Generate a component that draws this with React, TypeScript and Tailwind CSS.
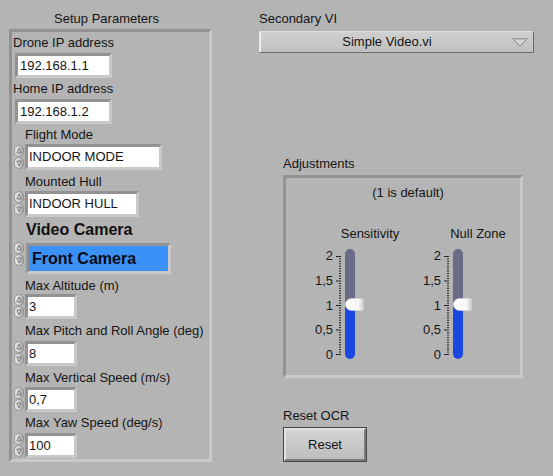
import React from "react";

function Spin() {
  return (
    <svg width="10" height="24" viewBox="0 0 10 24" className="shrink-0">
      <defs>
        <linearGradient id="spg" x1="0" x2="1" y1="0" y2="0">
          <stop offset="0" stopColor="#efefef" />
          <stop offset="0.5" stopColor="#d2d2d2" />
          <stop offset="1" stopColor="#9a9a9a" />
        </linearGradient>
      </defs>
      <rect x="0.5" y="0.5" width="9" height="11" rx="4.5" fill="url(#spg)" stroke="#8c8c8c" strokeWidth="0.8" />
      <rect x="0.5" y="12.5" width="9" height="11" rx="4.5" fill="url(#spg)" stroke="#8c8c8c" strokeWidth="0.8" />
      <path d="M5 3.2 L7.2 8 H2.8 Z" fill="none" stroke="#6a6a6a" strokeWidth="0.8" />
      <path d="M5 20.8 L7.2 16 H2.8 Z" fill="none" stroke="#6a6a6a" strokeWidth="0.8" />
    </svg>
  );
}

const frameCls =
  "border-[3px] border-t-[#929292] border-l-[#929292] border-b-[#c9c9c9] border-r-[#c9c9c9]";

function Scale() {
  const ticks = [];
  for (let i = 0; i <= 40; i++) {
    const y = 106.5 - i * 2.45;
    if (i % 10 === 0) {
      ticks.push(<rect key={i} x="1" y={y - 0.5} width="5" height="1" fill="#222" />);
    } else {
      ticks.push(<rect key={i} x="4" y={y - 0.5} width="2" height="1" fill="#222" />);
    }
  }
  return (
    <svg width="8" height="112" viewBox="0 0 8 112" className="absolute left-[25px] top-0">
      {ticks}
    </svg>
  );
}

function Slider() {
  return (
    <div className="relative w-[60px] h-[112px]">
      <div className="absolute left-0 top-[0px] w-[23px] text-right">2</div>
      <div className="absolute left-0 top-[25px] w-[23px] text-right">1,5</div>
      <div className="absolute left-0 top-[50px] w-[23px] text-right">1</div>
      <div className="absolute left-0 top-[74px] w-[23px] text-right">0,5</div>
      <div className="absolute left-0 top-[99px] w-[23px] text-right">0</div>
      <Scale />
      <div className="absolute left-[35px] top-[1px] w-[10px] h-[110px] rounded-full overflow-hidden flex flex-col">
        <div className="flex-1 bg-[#6c6b87]" />
        <div className="h-[53px] bg-[#1b48e0]" />
      </div>
      <svg width="19" height="13" viewBox="0 0 19 13" className="absolute left-[35px] top-[50px]">
        <defs>
          <linearGradient id="thg" x1="0" x2="1" y1="0" y2="0">
            <stop offset="0" stopColor="#ffffff" />
            <stop offset="0.75" stopColor="#f6f6f6" />
            <stop offset="1" stopColor="#c9c9c9" />
          </linearGradient>
        </defs>
        <path
          d="M7 0.5 H17 Q18.5 0.5 18.5 2 V11 Q18.5 12.5 17 12.5 H7 C2.5 12.5 0.3 9 0.3 6.5 C0.3 4 2.5 0.5 7 0.5 Z"
          fill="url(#thg)"
          stroke="#d8d8d8"
          strokeWidth="0.6"
        />
      </svg>
    </div>
  );
}

export default function App() {
  return (
    <div className="w-[553px] h-[476px] bg-[#b4b4b4] flex font-['Liberation_Sans',Arial,sans-serif] text-[13px] leading-[16px] text-[#141414] overflow-hidden">
      {/* Left column */}
      <div className="ml-[9px] w-[203px] flex flex-col shrink-0">
        <div className="mt-[11px] h-[16px] text-center pr-[8px]">Setup Parameters</div>
        <div className={`mt-[2px] h-[433px] flex flex-col ${frameCls}`}>
          <div className="mt-[3px] ml-[1px] h-[16px]">Drone IP address</div>
          <div className={`mt-[2px] ml-[3px] w-[97px] h-[25px] ${frameCls}`}>
            <div className="h-full bg-white pl-[2px] flex items-center">192.168.1.1</div>
          </div>
          <div className="mt-[3px] ml-[1px] h-[16px]">Home IP address</div>
          <div className={`mt-[2px] ml-[3px] w-[97px] h-[25px] ${frameCls}`}>
            <div className="h-full bg-white pl-[2px] flex items-center">192.168.1.2</div>
          </div>

          <div className="mt-[3px] ml-[13px] h-[16px]">Flight Mode</div>
          <div className="mt-[1px] ml-[2px] flex items-start">
            <div className="mt-[1px]"><Spin /></div>
            <div className={`ml-[1px] w-[137px] h-[26px] ${frameCls}`}>
              <div className="h-full bg-white pl-[1px] flex items-center">INDOOR MODE</div>
            </div>
          </div>

          <div className="mt-[4px] ml-[13px] h-[16px]">Mounted Hull</div>
          <div className="mt-[1px] ml-[2px] flex items-start">
            <div className="mt-[0px]"><Spin /></div>
            <div className={`ml-[1px] w-[114px] h-[26px] ${frameCls}`}>
              <div className="h-full bg-white pl-[1px] flex items-center">INDOOR HULL</div>
            </div>
          </div>

          <div className="mt-[4px] ml-[14px] h-[18px] leading-[18px] text-[16px] font-bold text-[#111]">Video Camera</div>
          <div className="mt-[3px] ml-[2px] flex items-start">
            <Spin />
            <div className={`ml-[2px] mt-[1px] w-[145px] h-[31px] ${frameCls}`}>
              <div className="h-full bg-[#3a92f8] pl-[3px] flex items-center text-[16px] font-bold text-[#0a0a14]">Front Camera</div>
            </div>
          </div>

          <div className="mt-[4px] ml-[13px] h-[16px]">Max Altitude (m)</div>
          <div className="ml-[2px] flex items-start">
            <Spin />
            <div className={`ml-[1px] w-[52px] h-[25px] ${frameCls}`}>
              <div className="h-full bg-white pl-[1px] flex items-center">3</div>
            </div>
          </div>

          <div className="mt-[4px] ml-[13px] h-[16px]">Max Pitch and Roll Angle (deg)</div>
          <div className="mt-[2px] ml-[2px] flex items-start">
            <Spin />
            <div className={`ml-[1px] w-[52px] h-[25px] ${frameCls}`}>
              <div className="h-full bg-white pl-[1px] flex items-center">8</div>
            </div>
          </div>

          <div className="mt-[4px] ml-[13px] h-[16px]">Max Vertical Speed (m/s)</div>
          <div className="mt-[1px] ml-[2px] flex items-start">
            <Spin />
            <div className={`ml-[1px] w-[52px] h-[25px] ${frameCls}`}>
              <div className="h-full bg-white pl-[1px] flex items-center">0,7</div>
            </div>
          </div>

          <div className="mt-[3px] ml-[13px] h-[16px]">Max Yaw Speed (deg/s)</div>
          <div className="mt-[2px] ml-[2px] flex items-start">
            <Spin />
            <div className={`ml-[1px] w-[52px] h-[25px] ${frameCls}`}>
              <div className="h-full bg-white pl-[1px] flex items-center">100</div>
            </div>
          </div>
        </div>
      </div>

      {/* Right column */}
      <div className="ml-[47px] w-[275px] flex flex-col shrink-0">
        <div className="mt-[11px] h-[16px]">Secondary VI</div>
        <div className="mt-[4px] w-[275px] h-[22px] flex items-center border border-t-[#dedede] border-l-[#e6e6e6] border-b-[#6a6a6a] border-r-[#6a6a6a] bg-gradient-to-b from-[#d0d0d0] to-[#bfbfbf] shadow-[inset_1px_0_0_#efefef]">
          <div className="flex-1 text-center pl-[2px]">Simple Video.vi</div>
          <svg width="16" height="9" viewBox="0 0 16 9" className="mr-[5px] shrink-0">
            <path d="M0.8 0.8 H15.2 L8 8.2 Z" fill="#d6d6d6" stroke="#7a7a7a" strokeWidth="0.9" />
          </svg>
        </div>

        <div className="mt-[103px] ml-[24px] h-[16px]">Adjustments</div>
        <div className={`mt-[3px] ml-[24px] w-[240px] h-[203px] flex flex-col ${frameCls}`}>
          <div className="mt-[7px] h-[16px] text-center pl-[10px]">(1 is default)</div>
          <div className="mt-[25px] ml-[24px] flex">
            <div className="w-[108px] flex flex-col">
              <div className="w-[120px] h-[16px] text-center">Sensitivity</div>
              <div className="mt-[6px]"><Slider /></div>
            </div>
            <div className="w-[108px] flex flex-col">
              <div className="w-[120px] h-[16px] text-center">Null Zone</div>
              <div className="mt-[6px]"><Slider /></div>
            </div>
          </div>
        </div>

        <div className="mt-[30px] ml-[24px] h-[16px]">Reset OCR</div>
        <div className="mt-[3px] ml-[24px] w-[84px] h-[35px] border border-[#454545]">
          <div className="h-full border-2 border-t-[#e4e4e4] border-l-[#e4e4e4] border-b-[#7c7c7c] border-r-[#7c7c7c] bg-gradient-to-b from-[#d4d4d4] to-[#bdbdbd] flex items-center justify-center">
            Reset
          </div>
        </div>
      </div>
    </div>
  );
}
